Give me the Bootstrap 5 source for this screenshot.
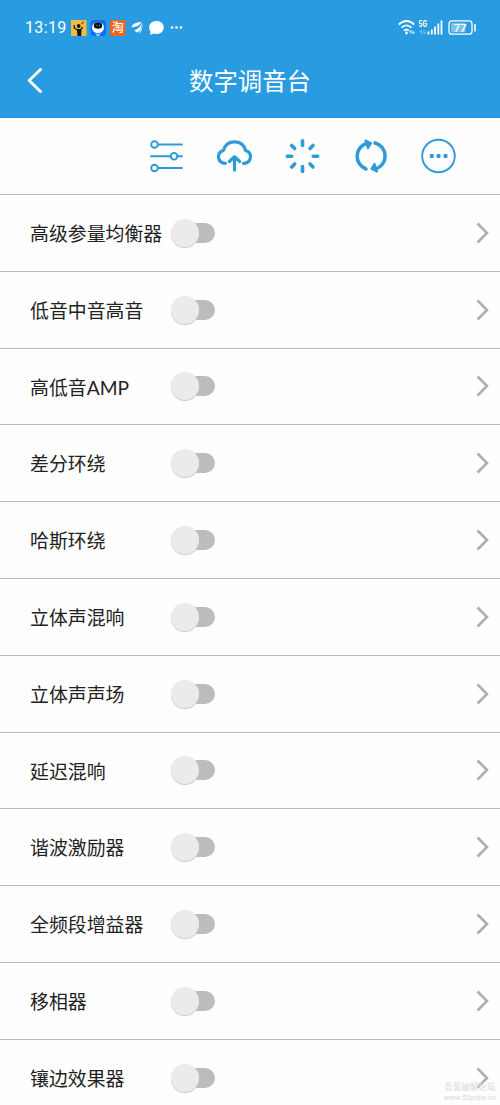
<!DOCTYPE html>
<html lang="zh-CN">
<head>
    <meta charset="UTF-8">
    <meta name="viewport" content="width=device-width, initial-scale=1.0">
    <title>数字调音台</title>
    <link rel="stylesheet" href="https://cdn.jsdelivr.net/npm/bootstrap@5.3.0/dist/css/bootstrap.min.css">
    <style>
        body { font-family: Roboto, "Noto Sans CJK SC", sans-serif; color: #222; background: #fefefe; }
        svg { display: block; flex-shrink: 0; }
        .screen { height: 1105px; }
        .app-header { background: #299ce1; height: 118px; }
        .status-bar { height: 45px; padding: 10px 24px 0 25px; }
        .clock { font-size: 16px; letter-spacing: .35px; width: 46px; line-height: 1; }
        .title-bar { height: 73px; padding: 0 26px; }
        .title-bar h1 { font-size: 24.4px; font-weight: 400; line-height: 1; padding-top: 2px; }
        .side { width: 18px; }
        .tools { height: 77px; padding-right: 43px; gap: 32px; border-bottom: 1px solid #b9b9b9; }
        .tools svg { fill: none; stroke: #2f9bd6; stroke-linecap: round; stroke-linejoin: round; }
        .fx-row { height: 76.8px; padding: 0 11px 0 30px; border-bottom: 1px solid #b9b9b9; }
        .fx-name { width: 141px; font-size: 18.9px; white-space: nowrap; line-height: 1; padding-top: 5px; }
        .latin { font-family: Lato, sans-serif; font-size: 19.2px; line-height: 0; }
        .fx-switch { width: 44px; height: 28px; }
        .fx-switch::before { content: ""; width: 28px; height: 28px; border-radius: 50%; background: #ebebeb; box-shadow: 0 1px 1px #c9c9c9; z-index: 1; }
        .fx-switch::after { content: ""; width: 37px; height: 20px; margin-left: -21px; border-radius: 10px; background: #bcbcbc; }
        .watermark { right: 4px; bottom: 2px; color: #e0e0e0; font-size: 8.6px; line-height: 10px; text-shadow: 0 0 1px #eee; }
        .watermark small { font-size: 7.4px; }
    </style>
</head>
<body>
    <svg class="d-none">
        <symbol id="chevron" viewBox="0 0 13 22">
            <path d="M1.5 1.5 11 11 1.5 20.5" fill="none" stroke="#a9afb4" stroke-width="2.6"/>
        </symbol>
    </svg>
    <div class="screen position-relative overflow-hidden">
        <header class="app-header text-white">
            <div class="status-bar d-flex align-items-center">
                <span class="clock">13:19</span>
                <svg width="114" height="20" viewBox="71 18 114 20">
                    <!-- app notifications -->
                    <rect x="71" y="20" width="15.5" height="16" fill="#efbd46"/>
                    <path d="M74.300 25v3l2.700 1.700h3.500l2.300-2.500" fill="none" stroke="#171812" stroke-width="1.300"/>
                    <path d="M76.800 29.500h4.800l-.4 6.500h-3.700z" fill="#171812"/>
                    <circle cx="78.700" cy="26" r="1.900" fill="#171812"/>
                    <path d="M81.500 24l2.200-2.200" stroke="#a14c24" stroke-width="1.500"/>
                    <rect x="90.500" y="20" width="15.500" height="16" rx="3.500" fill="#116cf0"/>
                    <ellipse cx="98" cy="27.500" rx="6" ry="5.500" fill="#fff"/>
                    <ellipse cx="98" cy="25.500" rx="4.200" ry="3.200" fill="#07152c"/>
                    <path d="M96.500 25.500h.8M99 25.500h.8" stroke="#b8c4d0" stroke-width=".8"/>
                    <path d="M95 33l3 1 3-1-2 3h-2z" fill="#79dff8"/>
                    <rect x="110" y="20" width="15.500" height="16" rx="2" fill="#ee651c"/>
                    <text x="111.800" y="32.200" font-size="12" font-weight="500" font-family="Noto Sans CJK SC, sans-serif" fill="#fff">淘</text>
                    <path d="M131.300 27.300c1-3.800 5-5 10.200-5.500-1.500 3.800-5 5.500-10.200 5.500zM134.300 30.500c4-1.800 6.500-4.500 7.700-8.300 1 4.500-1.500 9-5.500 10.300zM138.500 34c3.200-2.500 4.400-5.500 3.900-10" fill="#fff" stroke="#299ce1" stroke-width=".3"/>
                    <path d="M156.500 21c4.200 0 7.300 2.700 7.300 6.500s-3.100 6.500-7.300 6.500c-1 0-2-.2-2.800-.5-1.200.8-2.700 1.200-4 1 .7-.8 1-1.800.9-2.800-.9-1.100-1.400-2.500-1.400-4.200 0-3.800 3.100-6.500 7.300-6.500z" fill="#fff"/>
                    <circle cx="172" cy="27.500" r="1.300" fill="#fff"/>
                    <circle cx="176.500" cy="27.500" r="1.300" fill="#fff"/>
                    <circle cx="181" cy="27.500" r="1.300" fill="#fff"/>
                </svg>
                <svg class="ms-auto" width="78" height="18" viewBox="398 19 78 18">
                    <!-- wifi -->
                    <g fill="none" stroke="#fff" stroke-width="1.700">
                        <path d="M398.800 24.500q7.700-7 15.400 0M401.500 27.700q5-4.500 10 0M404 30.700q2.500-2.200 5 0"/>
                    </g>
                    <circle cx="406.500" cy="33" r="1.400" fill="#fff"/>
                    <path d="M411 33.500v-3l-1.500 1.800M413 31v3l1.600-1.800" fill="none" stroke="#fff" stroke-width=".9"/>
                    <!-- mobile signal -->
                    <text x="418.500" y="26.600" font-size="9" font-weight="700" textLength="8.500" lengthAdjust="spacingAndGlyphs" fill="#fff">5G</text>
                    <path d="M421.500 34v-4l-1.500 2M424 30v4l1.500-2" fill="none" stroke="#8fcdf1" stroke-width=".9"/>
                    <path d="M428.500 34.500v-3M431.800 34.500v-5M435 34.500v-8M438.300 34.500v-11M441.500 34.500v-14" stroke="#fff" stroke-width="1.800"/>
                    <!-- battery -->
                    <rect x="449" y="20.800" width="23" height="13.400" rx="3" fill="none" stroke="#fff" stroke-width="1.300"/>
                    <rect x="451" y="22.800" width="14.500" height="9.400" rx="1" fill="#78c2f0"/>
                    <text x="453.500" y="31.700" font-size="11.500" font-weight="500" textLength="13" fill="#fff">77</text>
                    <path d="M475 24v7.500" stroke="#fff" stroke-width="1.500"/>
                </svg>
            </div>
            <div class="title-bar d-flex align-items-center justify-content-between">
                <svg class="side" height="28" viewBox="0 0 18 28">
                    <path d="M14.500 1.500 3.200 12.500 14.500 23.500" fill="none" stroke="#fff" stroke-width="2.900" stroke-linecap="round" stroke-linejoin="round"/>
                </svg>
                <h1 class="mb-0">数字调音台</h1>
                <span class="side"></span>
            </div>
        </header>

        <div class="tools d-flex align-items-center justify-content-end">
            <svg width="36" height="36" viewBox="0.5 0 36 36" stroke-width="1.900">
                <path d="M9.500 6.500h24M2.500 18.300h20M29.500 18.300h4M9.500 30h24"/>
                <circle cx="6" cy="6.500" r="3.300"/>
                <circle cx="25.500" cy="18.300" r="3.300"/>
                <circle cx="6" cy="30" r="3.300"/>
            </svg>
            <svg width="36" height="36" viewBox="0.5 0 36 36" stroke-width="3.200">
                <path d="M9 25.300C4.800 25.500 2 22.500 2 18.800c0-3.300 2-5.600 5-6.300C8.300 7 12.500 3.800 18 3.800s9.700 3.200 11 8.700c3 .7 5 3 5 6.300 0 3.700-2.800 6.700-7 6.500"/>
                <path d="M18 32V19.500M12.800 23.500 18 18.800l5.200 4.700"/>
            </svg>
            <svg width="36" height="36" viewBox="0.5 0 36 36" stroke-width="3.600">
                <path d="M18 2.800v4.700M18 28.500v5M2.800 18.300h4.400M28.800 18.300h4.400M7.200 7.500l3 3M25.500 10.500l3-3M7.200 29l3-3M25.500 26l3 3"/>
            </svg>
            <svg width="36" height="36" viewBox="0 0 36 36" stroke-width="3.500">
                <path d="M13 31A13.500 13.500 0 0 1 14 5.300M22 5A13.500 13.500 0 0 1 22.500 31"/>
                <path d="M12.500 2.500 18 5.200l-3 4.800zM24 33.500 18.500 30.800l3-4.800z" fill="#2f9bd6" stroke-width="2.200"/>
            </svg>
            <svg width="36" height="36" viewBox="0.5 0 36 36" stroke-width="1.900">
                <circle cx="18" cy="18" r="16.300"/>
                <g fill="#2f9bd6" stroke="none">
                    <circle cx="11.300" cy="18" r="2.200"/>
                    <circle cx="18" cy="18" r="2.200"/>
                    <circle cx="25" cy="18" r="2.200"/>
                </g>
            </svg>
        </div>

        <main>
            <div class="fx-row d-flex align-items-center">
                <span class="fx-name">高级参量均衡器</span>
                <span class="fx-switch d-flex align-items-center"></span>
                <svg class="ms-auto" width="13" height="22"><use href="#chevron"/></svg>
            </div>
            <div class="fx-row d-flex align-items-center">
                <span class="fx-name">低音中音高音</span>
                <span class="fx-switch d-flex align-items-center"></span>
                <svg class="ms-auto" width="13" height="22"><use href="#chevron"/></svg>
            </div>
            <div class="fx-row d-flex align-items-center">
                <span class="fx-name">高低音<span class="latin">AMP</span></span>
                <span class="fx-switch d-flex align-items-center"></span>
                <svg class="ms-auto" width="13" height="22"><use href="#chevron"/></svg>
            </div>
            <div class="fx-row d-flex align-items-center">
                <span class="fx-name">差分环绕</span>
                <span class="fx-switch d-flex align-items-center"></span>
                <svg class="ms-auto" width="13" height="22"><use href="#chevron"/></svg>
            </div>
            <div class="fx-row d-flex align-items-center">
                <span class="fx-name">哈斯环绕</span>
                <span class="fx-switch d-flex align-items-center"></span>
                <svg class="ms-auto" width="13" height="22"><use href="#chevron"/></svg>
            </div>
            <div class="fx-row d-flex align-items-center">
                <span class="fx-name">立体声混响</span>
                <span class="fx-switch d-flex align-items-center"></span>
                <svg class="ms-auto" width="13" height="22"><use href="#chevron"/></svg>
            </div>
            <div class="fx-row d-flex align-items-center">
                <span class="fx-name">立体声声场</span>
                <span class="fx-switch d-flex align-items-center"></span>
                <svg class="ms-auto" width="13" height="22"><use href="#chevron"/></svg>
            </div>
            <div class="fx-row d-flex align-items-center">
                <span class="fx-name">延迟混响</span>
                <span class="fx-switch d-flex align-items-center"></span>
                <svg class="ms-auto" width="13" height="22"><use href="#chevron"/></svg>
            </div>
            <div class="fx-row d-flex align-items-center">
                <span class="fx-name">谐波激励器</span>
                <span class="fx-switch d-flex align-items-center"></span>
                <svg class="ms-auto" width="13" height="22"><use href="#chevron"/></svg>
            </div>
            <div class="fx-row d-flex align-items-center">
                <span class="fx-name">全频段增益器</span>
                <span class="fx-switch d-flex align-items-center"></span>
                <svg class="ms-auto" width="13" height="22"><use href="#chevron"/></svg>
            </div>
            <div class="fx-row d-flex align-items-center">
                <span class="fx-name">移相器</span>
                <span class="fx-switch d-flex align-items-center"></span>
                <svg class="ms-auto" width="13" height="22"><use href="#chevron"/></svg>
            </div>
            <div class="fx-row d-flex align-items-center">
                <span class="fx-name">镶边效果器</span>
                <span class="fx-switch d-flex align-items-center"></span>
                <svg class="ms-auto" width="13" height="22"><use href="#chevron"/></svg>
            </div>
        </main>

        <div class="watermark position-absolute text-center">吾爱破解论坛<br><small>www.52pojie.cn</small></div>
    </div>

    <script src="https://cdn.jsdelivr.net/npm/bootstrap@5.3.0/dist/js/bootstrap.bundle.min.js"></script>
</body>
</html>
